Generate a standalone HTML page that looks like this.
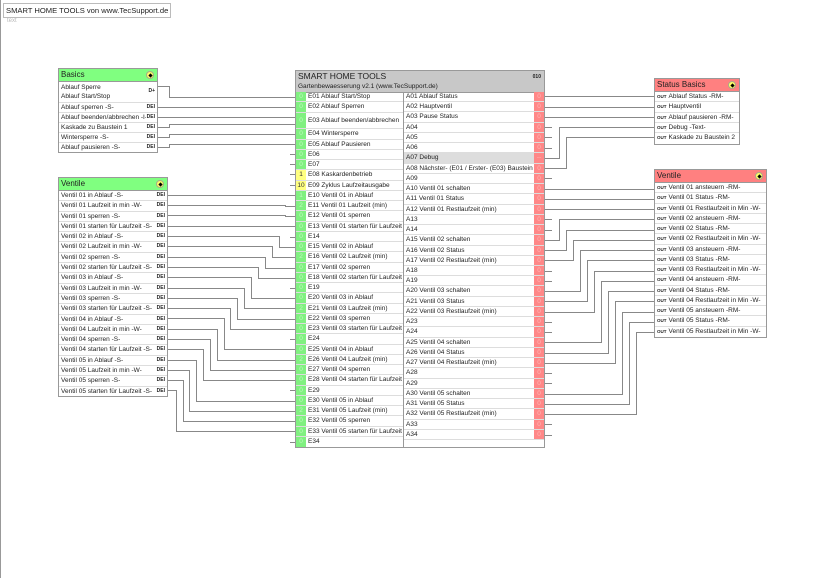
<!DOCTYPE html>
<html><head><meta charset="utf-8"><style>
*{margin:0;padding:0;box-sizing:border-box}
body{width:820px;height:578px;background:#fff;position:relative;overflow:hidden;font-family:"Liberation Sans",sans-serif;color:#222}
.bl{position:absolute;left:0;top:0;width:1px;height:578px;background:#999}
.abs{position:absolute}
.box{position:absolute;border:1px solid #999;background:#fff}
.hd{height:13px;font-size:8px;line-height:12px;padding-left:2px;border-bottom:1px solid #999;position:relative}
.ic{position:absolute;right:3px;top:2px;width:8px;height:8px;border-radius:50%;background:#ff6;border:1px solid #aa8}
.ic:after{content:"";position:absolute;left:1.5px;top:1.5px;width:3px;height:3px;background:#000;transform:rotate(45deg)}
.row{font-size:6.5px;line-height:9px;padding-left:2px;border-bottom:1px solid #ddd;position:relative;white-space:nowrap;overflow:hidden}
.tg{position:absolute;right:2px;top:0;font-size:5px;font-weight:bold;background:#fff;padding-left:1px}
.tgo{font-size:4.5px;font-weight:bold;margin-right:2px}
.col{position:absolute;top:92px}
.e{display:flex;height:10.25px;font-size:6.5px;line-height:9.5px;border-bottom:1px solid #ddd;white-space:nowrap;overflow:hidden}
.e .v{width:10px;background:#80f080;color:#c0f8c0;text-align:center;flex:none}
.e .v.y{background:#ffff80;color:#333}
.e .t{padding-left:2px;flex:1;overflow:hidden}
.a{display:flex;height:10.24px;font-size:6.5px;line-height:9.5px;border-bottom:1px solid #ddd;white-space:nowrap;overflow:hidden}
.a .t{padding-left:2px;flex:1;overflow:hidden}
.a .v{width:10px;background:#ff8888;color:#ffb8b8;text-align:center;flex:none}
.a.g .t{background:#ddd}
svg{position:absolute;left:0;top:0}
</style></head><body>
<div class="bl"></div>
<div class="abs" style="left:3px;top:3px;width:168px;height:15px;border:1px solid #bbb;font-size:7.6px;line-height:13px;padding-left:2px;white-space:nowrap;overflow:hidden">SMART HOME TOOLS von www.TecSupport.de</div>
<div class="abs" style="left:7px;top:18px;font-size:6px;color:#bbb">text</div>

<svg width="820" height="578" stroke="#888" stroke-width="1" fill="none">
<path d="M158 86.5H169.5V97.5H295"/>
<path d="M158 107.5H295"/><path d="M158 117.5H295"/>
<path d="M158 127.5H169.5V124.5H295"/>
<path d="M158 137.5H169.5V134.5H295"/>
<path d="M158 147.5H169.5V144.5H295"/>
<path d="M290 154.5H295M290 164.5H295M290 174.5H295M290 185.5H295"/>
<path d="M168 195.5H295"/>
<path d="M168 205.5H285.5V206.5H295"/>
<path d="M168 215.5H285.5V216.5H295"/>
<path d="M168 226.5H295"/>
<path d="M290 237.5H295"/>
<path d="M168 236.5H279.5V247.5H295"/>
<path d="M168 246.5H272.5V257.5H295"/>
<path d="M168 257.5H265.5V268.5H295"/>
<path d="M168 267.5H258.5V278.5H295"/>
<path d="M290 288.5H295"/>
<path d="M168 277.5H251.5V298.5H295"/>
<path d="M168 288.5H244.5V308.5H295"/>
<path d="M168 298.5H237.5V319.5H295"/>
<path d="M168 308.5H230.5V329.5H295"/>
<path d="M290 339.5H295"/>
<path d="M168 318.5H224.5V349.5H295"/>
<path d="M168 329.5H217.5V360.5H295"/>
<path d="M168 339.5H210.5V370.5H295"/>
<path d="M168 349.5H203.5V380.5H295"/>
<path d="M290 390.5H295"/>
<path d="M168 360.5H196.5V401.5H295"/>
<path d="M168 370.5H189.5V411.5H295"/>
<path d="M168 380.5H183.5V421.5H295"/>
<path d="M168 390.5H176.5V431.5H295"/>
<path d="M290 442.5H295"/>
<path d="M545 96.5H654"/><path d="M545 107.5H654"/><path d="M545 117.5H654"/>
<path d="M545 127.5H552M545 137.5H552M545 148.5H552"/>
<path d="M545 158.5H559.5V127.5H654"/>
<path d="M545 168.5H566.5V137.5H654"/>
<path d="M545 178.5H552"/>
<path d="M545 189.5H654"/><path d="M545 199.5H654"/><path d="M545 209.5H654"/>
<path d="M545 219.5H552M545 230.5H552"/>
<path d="M545 240.5H559.5V219.5H654"/>
<path d="M545 250.5H566.5V230.5H654"/>
<path d="M545 260.5H573.5V240.5H654"/>
<path d="M545 271.5H552M545 281.5H552"/>
<path d="M545 291.5H580.5V250.5H654"/>
<path d="M545 301.5H587.5V260.5H654"/>
<path d="M545 312.5H594.5V271.5H654"/>
<path d="M545 322.5H552M545 332.5H552"/>
<path d="M545 342.5H601.5V281.5H654"/>
<path d="M545 353.5H608.5V291.5H654"/>
<path d="M545 363.5H615.5V301.5H654"/>
<path d="M545 373.5H552M545 383.5H552"/>
<path d="M545 394.5H622.5V312.5H654"/>
<path d="M545 404.5H629.5V322.5H654"/>
<path d="M545 414.5H636.5V332.5H654"/>
<path d="M545 424.5H552M545 435.5H552"/>
</svg>

<div class="box" style="left:58px;top:68px;width:100px;height:85px">
<div class="hd" style="background:#80ff80">Basics<span class="ic"></span></div>
<div class="row" style="height:21px;line-height:9px;padding-top:1px">Ablauf Sperre<br>Ablauf Start/Stop<span class="tg" style="top:5px">D+</span></div>
<div class="row" style="height:10px">Ablauf sperren -S-<span class="tg">DEI</span></div>
<div class="row" style="height:10px">Ablauf beenden/abbrechen -I-<span class="tg">DEI</span></div>
<div class="row" style="height:10px">Kaskade zu Baustein 1<span class="tg">DEI</span></div>
<div class="row" style="height:10px">Wintersperre -S-<span class="tg">DEI</span></div>
<div class="row" style="height:10px;border:0">Ablauf pausieren -S-<span class="tg">DEI</span></div>
</div>

<div class="box" style="left:58px;top:177px;width:110px;height:220px">
<div class="hd" style="background:#80ff80">Ventile<span class="ic"></span></div>
<div class="row" style="height:10.3px">Ventil 01 in Ablauf -S-<span class="tg">DEI</span></div>
<div class="row" style="height:10.3px">Ventil 01 Laufzeit in min -W-<span class="tg">DEI</span></div>
<div class="row" style="height:10.3px">Ventil 01 sperren -S-<span class="tg">DEI</span></div>
<div class="row" style="height:10.3px">Ventil 01 starten für Laufzeit -S-<span class="tg">DEI</span></div>
<div class="row" style="height:10.3px">Ventil 02 in Ablauf -S-<span class="tg">DEI</span></div>
<div class="row" style="height:10.3px">Ventil 02 Laufzeit in min -W-<span class="tg">DEI</span></div>
<div class="row" style="height:10.3px">Ventil 02 sperren -S-<span class="tg">DEI</span></div>
<div class="row" style="height:10.3px">Ventil 02 starten für Laufzeit -S-<span class="tg">DEI</span></div>
<div class="row" style="height:10.3px">Ventil 03 in Ablauf -S-<span class="tg">DEI</span></div>
<div class="row" style="height:10.3px">Ventil 03 Laufzeit in min -W-<span class="tg">DEI</span></div>
<div class="row" style="height:10.3px">Ventil 03 sperren -S-<span class="tg">DEI</span></div>
<div class="row" style="height:10.3px">Ventil 03 starten für Laufzeit -S-<span class="tg">DEI</span></div>
<div class="row" style="height:10.3px">Ventil 04 in Ablauf -S-<span class="tg">DEI</span></div>
<div class="row" style="height:10.3px">Ventil 04 Laufzeit in min -W-<span class="tg">DEI</span></div>
<div class="row" style="height:10.3px">Ventil 04 sperren -S-<span class="tg">DEI</span></div>
<div class="row" style="height:10.3px">Ventil 04 starten für Laufzeit -S-<span class="tg">DEI</span></div>
<div class="row" style="height:10.3px">Ventil 05 in Ablauf -S-<span class="tg">DEI</span></div>
<div class="row" style="height:10.3px">Ventil 05 Laufzeit in min -W-<span class="tg">DEI</span></div>
<div class="row" style="height:10.3px">Ventil 05 sperren -S-<span class="tg">DEI</span></div>
<div class="row" style="height:10.3px;border:0">Ventil 05 starten für Laufzeit -S-<span class="tg">DEI</span></div>
</div>

<div class="box" style="left:295px;top:70px;width:250px;height:378px">
<div style="height:22px;background:#c8c8c8;border-bottom:1px solid #999;font-size:8.5px;line-height:9px;padding:1px 0 0 2px;position:relative">SMART HOME TOOLS<br><span style="font-size:6.5px;line-height:8px">Gartenbewaesserung v2.1 (www.TecSupport.de)</span><span style="position:absolute;right:3px;top:2px;font-size:5px;font-weight:bold">010</span></div>
</div>
<div class="col" style="left:296px;width:108px;border-right:1px solid #999">
<div class="e"><span class="v">0</span><span class="t">E01 Ablauf Start/Stop</span></div>
<div class="e"><span class="v">0</span><span class="t">E02 Ablauf Sperren</span></div>
<div class="e" style="height:16.9px;line-height:16px"><span class="v">0</span><span class="t">E03 Ablauf beenden/abbrechen</span></div>
<div class="e"><span class="v">0</span><span class="t">E04 Wintersperre</span></div>
<div class="e"><span class="v">0</span><span class="t">E05 Ablauf Pausieren</span></div>
<div class="e"><span class="v">0</span><span class="t">E06</span></div>
<div class="e"><span class="v">0</span><span class="t">E07</span></div>
<div class="e"><span class="v y">1</span><span class="t">E08 Kaskardenbetrieb</span></div>
<div class="e"><span class="v y">10</span><span class="t">E09 Zyklus Laufzeitausgabe</span></div>
<div class="e"><span class="v">1</span><span class="t">E10 Ventil 01 in Ablauf</span></div>
<div class="e"><span class="v">2</span><span class="t">E11 Ventil 01 Laufzeit (min)</span></div>
<div class="e"><span class="v">0</span><span class="t">E12 Ventil 01 sperren</span></div>
<div class="e"><span class="v">0</span><span class="t">E13 Ventil 01 starten für Laufzeit</span></div>
<div class="e"><span class="v">0</span><span class="t">E14</span></div>
<div class="e"><span class="v">0</span><span class="t">E15 Ventil 02 in Ablauf</span></div>
<div class="e"><span class="v">2</span><span class="t">E16 Ventil 02 Laufzeit (min)</span></div>
<div class="e"><span class="v">0</span><span class="t">E17 Ventil 02 sperren</span></div>
<div class="e"><span class="v">0</span><span class="t">E18 Ventil 02 starten für Laufzeit</span></div>
<div class="e"><span class="v">0</span><span class="t">E19</span></div>
<div class="e"><span class="v">0</span><span class="t">E20 Ventil 03 in Ablauf</span></div>
<div class="e"><span class="v">2</span><span class="t">E21 Ventil 03 Laufzeit (min)</span></div>
<div class="e"><span class="v">0</span><span class="t">E22 Ventil 03 sperren</span></div>
<div class="e"><span class="v">0</span><span class="t">E23 Ventil 03 starten für Laufzeit</span></div>
<div class="e"><span class="v">0</span><span class="t">E24</span></div>
<div class="e"><span class="v">0</span><span class="t">E25 Ventil 04 in Ablauf</span></div>
<div class="e"><span class="v">2</span><span class="t">E26 Ventil 04 Laufzeit (min)</span></div>
<div class="e"><span class="v">0</span><span class="t">E27 Ventil 04 sperren</span></div>
<div class="e"><span class="v">0</span><span class="t">E28 Ventil 04 starten für Laufzeit</span></div>
<div class="e"><span class="v">0</span><span class="t">E29</span></div>
<div class="e"><span class="v">0</span><span class="t">E30 Ventil 05 in Ablauf</span></div>
<div class="e"><span class="v">2</span><span class="t">E31 Ventil 05 Laufzeit (min)</span></div>
<div class="e"><span class="v">0</span><span class="t">E32 Ventil 05 sperren</span></div>
<div class="e"><span class="v">0</span><span class="t">E33 Ventil 05 starten für Laufzeit</span></div>
<div class="e" style="border:0"><span class="v">0</span><span class="t">E34</span></div>
</div>
<div class="col" style="left:404px;width:140px">
<div class="a"><span class="t">A01 Ablauf Status</span><span class="v">0</span></div>
<div class="a"><span class="t">A02 Hauptventil</span><span class="v">0</span></div>
<div class="a"><span class="t">A03 Pause Status</span><span class="v">0</span></div>
<div class="a"><span class="t">A04</span><span class="v">0</span></div>
<div class="a"><span class="t">A05</span><span class="v">0</span></div>
<div class="a"><span class="t">A06</span><span class="v">0</span></div>
<div class="a g"><span class="t">A07 Debug</span><span class="v">--</span></div>
<div class="a"><span class="t">A08 Nächster- (E01 / Erster- (E03) Baustein</span><span class="v">0</span></div>
<div class="a"><span class="t">A09</span><span class="v">0</span></div>
<div class="a"><span class="t">A10 Ventil 01 schalten</span><span class="v">0</span></div>
<div class="a"><span class="t">A11 Ventil 01 Status</span><span class="v">0</span></div>
<div class="a"><span class="t">A12 Ventil 01 Restlaufzeit (min)</span><span class="v">0</span></div>
<div class="a"><span class="t">A13</span><span class="v">0</span></div>
<div class="a"><span class="t">A14</span><span class="v">0</span></div>
<div class="a"><span class="t">A15 Ventil 02 schalten</span><span class="v">0</span></div>
<div class="a"><span class="t">A16 Ventil 02 Status</span><span class="v">0</span></div>
<div class="a"><span class="t">A17 Ventil 02 Restlaufzeit (min)</span><span class="v">0</span></div>
<div class="a"><span class="t">A18</span><span class="v">0</span></div>
<div class="a"><span class="t">A19</span><span class="v">0</span></div>
<div class="a"><span class="t">A20 Ventil 03 schalten</span><span class="v">0</span></div>
<div class="a"><span class="t">A21 Ventil 03 Status</span><span class="v">0</span></div>
<div class="a"><span class="t">A22 Ventil 03 Restlaufzeit (min)</span><span class="v">0</span></div>
<div class="a"><span class="t">A23</span><span class="v">0</span></div>
<div class="a"><span class="t">A24</span><span class="v">0</span></div>
<div class="a"><span class="t">A25 Ventil 04 schalten</span><span class="v">0</span></div>
<div class="a"><span class="t">A26 Ventil 04 Status</span><span class="v">0</span></div>
<div class="a"><span class="t">A27 Ventil 04 Restlaufzeit (min)</span><span class="v">0</span></div>
<div class="a"><span class="t">A28</span><span class="v">0</span></div>
<div class="a"><span class="t">A29</span><span class="v">0</span></div>
<div class="a"><span class="t">A30 Ventil 05 schalten</span><span class="v">0</span></div>
<div class="a"><span class="t">A31 Ventil 05 Status</span><span class="v">0</span></div>
<div class="a"><span class="t">A32 Ventil 05 Restlaufzeit (min)</span><span class="v">0</span></div>
<div class="a"><span class="t">A33</span><span class="v">0</span></div>
<div class="a"><span class="t">A34</span><span class="v">0</span></div>
</div>

<div class="box" style="left:654px;top:78px;width:86px;height:67px">
<div class="hd" style="background:#ff8080">Status Basics<span class="ic"></span></div>
<div class="row" style="height:10.3px"><span class="tgo">OUT</span>Ablauf Status -RM-</div>
<div class="row" style="height:10.3px"><span class="tgo">OUT</span>Hauptventil</div>
<div class="row" style="height:10.3px"><span class="tgo">OUT</span>Ablauf pausieren -RM-</div>
<div class="row" style="height:10.3px"><span class="tgo">OUT</span>Debug -Text-</div>
<div class="row" style="height:10.3px;border:0"><span class="tgo">OUT</span>Kaskade zu Baustein 2</div>
</div>

<div class="box" style="left:654px;top:169px;width:113px;height:169px">
<div class="hd" style="background:#ff8080">Ventile<span class="ic"></span></div>
<div class="row" style="height:10.26px"><span class="tgo">OUT</span>Ventil 01 ansteuern -RM-</div>
<div class="row" style="height:10.26px"><span class="tgo">OUT</span>Ventil 01 Status -RM-</div>
<div class="row" style="height:10.26px"><span class="tgo">OUT</span>Ventil 01 Restlaufzeit in Min -W-</div>
<div class="row" style="height:10.26px"><span class="tgo">OUT</span>Ventil 02 ansteuern -RM-</div>
<div class="row" style="height:10.26px"><span class="tgo">OUT</span>Ventil 02 Status -RM-</div>
<div class="row" style="height:10.26px"><span class="tgo">OUT</span>Ventil 02 Restlaufzeit in Min -W-</div>
<div class="row" style="height:10.26px"><span class="tgo">OUT</span>Ventil 03 ansteuern -RM-</div>
<div class="row" style="height:10.26px"><span class="tgo">OUT</span>Ventil 03 Status -RM-</div>
<div class="row" style="height:10.26px"><span class="tgo">OUT</span>Ventil 03 Restlaufzeit in Min -W-</div>
<div class="row" style="height:10.26px"><span class="tgo">OUT</span>Ventil 04 ansteuern -RM-</div>
<div class="row" style="height:10.26px"><span class="tgo">OUT</span>Ventil 04 Status -RM-</div>
<div class="row" style="height:10.26px"><span class="tgo">OUT</span>Ventil 04 Restlaufzeit in Min -W-</div>
<div class="row" style="height:10.26px"><span class="tgo">OUT</span>Ventil 05 ansteuern -RM-</div>
<div class="row" style="height:10.26px"><span class="tgo">OUT</span>Ventil 05 Status -RM-</div>
<div class="row" style="height:10.26px;border:0"><span class="tgo">OUT</span>Ventil 05 Restlaufzeit in Min -W-</div>
</div>
</body></html>
